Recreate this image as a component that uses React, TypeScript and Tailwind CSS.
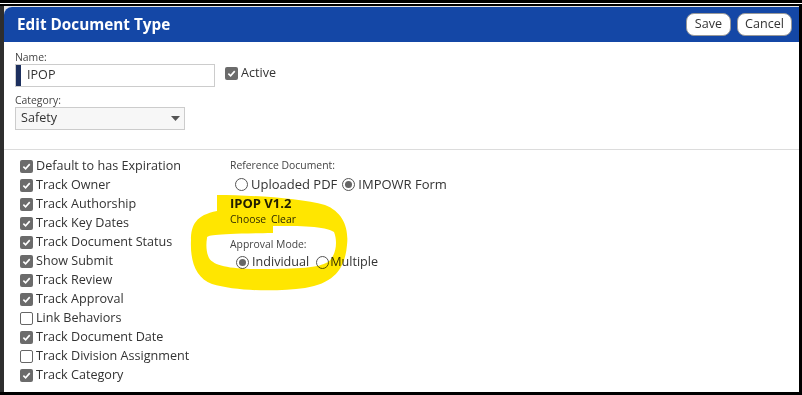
import React from 'react';

const font = { fontFamily: '"Open Sans", "Liberation Sans", sans-serif' };

const options: { label: string; checked: boolean }[] = [
  { label: 'Default to has Expiration', checked: true },
  { label: 'Track Owner', checked: true },
  { label: 'Track Authorship', checked: true },
  { label: 'Track Key Dates', checked: true },
  { label: 'Track Document Status', checked: true },
  { label: 'Show Submit', checked: true },
  { label: 'Track Review', checked: true },
  { label: 'Track Approval', checked: true },
  { label: 'Link Behaviors', checked: false },
  { label: 'Track Document Date', checked: true },
  { label: 'Track Division Assignment', checked: false },
  { label: 'Track Category', checked: true },
];

function Check({ checked }: { checked: boolean }) {
  return checked ? (
    <span className="w-[13px] h-[13px] rounded-[2px] bg-[#6b6b6b] flex items-center justify-center shrink-0">
      <svg width="9" height="9" viewBox="0 0 10 10">
        <path d="M1.5 5.2 L4 7.6 L8.6 2.4" fill="none" stroke="white" strokeWidth="1.8" />
      </svg>
    </span>
  ) : (
    <span className="w-[13px] h-[13px] rounded-[2px] border border-[#666] bg-white shrink-0" />
  );
}

function Radio({ checked }: { checked: boolean }) {
  return (
    <span className="w-[13px] h-[13px] rounded-full border border-[#555] bg-white flex items-center justify-center shrink-0">
      {checked && <span className="w-[7px] h-[7px] rounded-full bg-[#666]" />}
    </span>
  );
}

export default function App() {
  return (
    <div className="relative w-[802px] h-[395px] bg-black flex flex-col overflow-hidden" style={font}>
      {/* screenshot frame */}
      <div className="h-[3px] bg-black" />
      <div className="h-[1px] bg-white" />
      <div className="h-[2px] bg-black" />
      <div className="flex flex-1 min-h-0">
        <div className="w-[4px] bg-[#2e2e2e]" />
        <div className="flex-1 bg-[#e6e6e6] pt-[1px] flex flex-col min-w-0">
          <div className="flex-1 bg-white rounded-tl-[8px] overflow-hidden flex flex-col">
            {/* header */}
            <div className="h-[35px] bg-[#1447a6] flex items-center justify-between pl-[13px] pr-[7px]">
              <h1 className="text-white font-bold text-[15.3px] leading-none">Edit Document Type</h1>
              <div className="flex gap-[6px]">
                <button className="w-[45px] h-[23px] rounded-[8px] bg-white border border-[#999] text-[12.6px] text-[#333] leading-none">
                  Save
                </button>
                <button className="w-[55px] h-[23px] rounded-[8px] bg-white border border-[#999] text-[12.6px] text-[#333] leading-none">
                  Cancel
                </button>
              </div>
            </div>

            {/* top fields */}
            <div className="pl-[11px] pt-[8px] pb-[19px] border-b border-[#dcdcdc]">
              <div className="text-[10.4px] text-[#444] leading-[14px]">Name:</div>
              <div className="flex items-start gap-[10px]">
                <div className="w-[200px] h-[23px] border border-[#ccc] flex items-center">
                  <span className="w-[5px] h-full bg-[#1c2f5e]" />
                  <span className="pl-[6px] text-[12.6px] text-[#333]">IPOP</span>
                </div>
                <label className="h-[18px] flex items-center gap-[3px] text-[12.6px] text-[#333]">
                  <Check checked />
                  Active
                </label>
              </div>
              <div className="text-[10.4px] text-[#444] leading-[14px] mt-[6px]">Category:</div>
              <div className="w-[170px] h-[23px] border border-[#ccc] bg-[#f7f7f7] flex items-center justify-between pl-[5px] pr-[4px]">
                <span className="text-[12.6px] text-[#333]">Safety</span>
                <svg width="9" height="5" viewBox="0 0 9 5">
                  <path d="M0 0 H9 L4.5 5 Z" fill="#555" />
                </svg>
              </div>
            </div>

            {/* lower section */}
            <div className="flex pl-[16px] pt-[7px]">
              <div className="w-[210px] flex flex-col">
                {options.map((o) => (
                  <label key={o.label} className="h-[19px] flex items-center gap-[3px] text-[12.6px] text-[#333]">
                    <Check checked={o.checked} />
                    {o.label}
                  </label>
                ))}
              </div>
              <div className="flex flex-col pt-[1px]">
                <div className="text-[10.4px] text-[#444] leading-[14px]">Reference Document:</div>
                <div className="flex items-center h-[19px] mt-[3px] pl-[5px] text-[13px] text-[#333]">
                  <Radio checked={false} />
                  <span className="ml-[3px]">Uploaded PDF</span>
                  <span className="ml-[5px]">
                    <Radio checked />
                  </span>
                  <span className="ml-[3px]">IMPOWR Form</span>
                </div>
                <div className="text-[13px] font-bold text-[#222] leading-[18px]">IPOP V1.2</div>
                <div className="text-[10.4px] text-[#333] leading-[14px]">
                  Choose <span className="ml-[2px] text-[#2a2ad8]">Clear</span>
                </div>
                <div className="text-[10.4px] text-[#444] leading-[14px] mt-[11px]">Approval Mode:</div>
                <div className="flex items-center h-[19px] mt-[2px] pl-[6px] text-[12.6px] text-[#333]">
                  <Radio checked />
                  <span className="ml-[3px]">Individual</span>
                  <span className="ml-[7px]">
                    <Radio checked={false} />
                  </span>
                  <span className="ml-[1px]">Multiple</span>
                </div>
              </div>
            </div>
          </div>
        </div>
        <div className="w-[3px] bg-black" />
      </div>
      <div className="h-[3px] bg-black" />

      {/* yellow highlighter annotation drawn over the screenshot */}
      <svg
        className="absolute left-0 top-0 mix-blend-multiply pointer-events-none"
        width="802"
        height="395"
        viewBox="0 0 802 395"
      >
        <path
          fillRule="evenodd"
          fill="#ffe600"
          d="M217 195 C250 195 300 198 325 205 C343 212 349 228 347 245 C345 268 335 283 305 288 C275 292 235 291 212 284 C196 278 190 262 191 240 C191 225 196 215 217 211 Z
             M207 238 C207 235 215 234 273 233 L273 226 C300 226 325 226 334 232 C338 242 336 256 328 262 C318 268 300 269 260 269 C230 269 214 266 209 258 C206 252 206 244 207 238 Z"
        />
      </svg>
    </div>
  );
}
